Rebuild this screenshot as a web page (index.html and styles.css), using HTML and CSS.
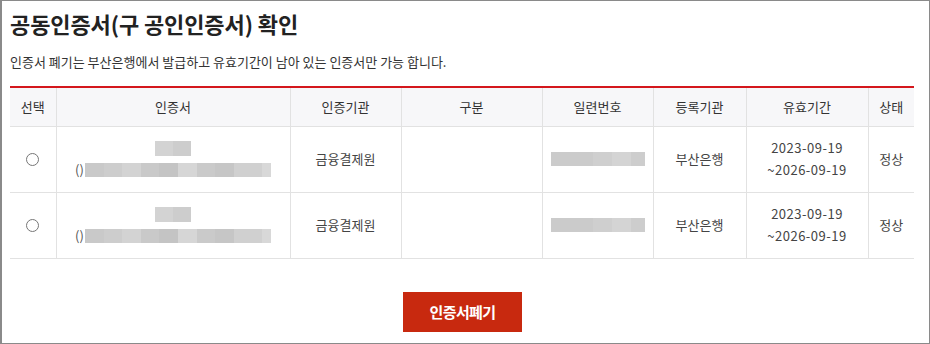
FILE: index.html
```html
<html>
<head>
    <title>공동인증서 확인</title>
    <link rel="stylesheet" href="styles.css">
</head>
<body>

<div class="page">
    <!-- 제목 -->
    <h2 class="title">공동인증서(구 공인인증서) 확인</h2>
    <p class="desc">인증서 폐기는 부산은행에서 발급하고 유효기간이 남아 있는 인증서만 가능 합니다.</p>

    <!-- 인증서 목록 -->
    <table class="cert-table">
        <colgroup>
            <col style="width:46px">
            <col style="width:234px">
            <col style="width:111px">
            <col style="width:141px">
            <col style="width:111px">
            <col style="width:93px">
            <col style="width:122px">
            <col style="width:46px">
        </colgroup>
        <thead>
            <tr>
                <th>선택</th>
                <th>인증서</th>
                <th>인증기관</th>
                <th>구분</th>
                <th>일련번호</th>
                <th>등록기관</th>
                <th>유효기간</th>
                <th>상태</th>
            </tr>
        </thead>
        <tbody>
            <tr>
                <td><input type="radio" name="cert" class="radio"></td>
                <td>
                    <div class="blur-name"></div>
                    <div class="cert-dn">()<span class="blur-dn"></span></div>
                </td>
                <td>금융결제원</td>
                <td></td>
                <td><span class="blur-serial"></span></td>
                <td>부산은행</td>
                <td class="period">2023-09-19<br>~2026-09-19</td>
                <td>정상</td>
            </tr>
            <tr>
                <td><input type="radio" name="cert" class="radio"></td>
                <td>
                    <div class="blur-name"></div>
                    <div class="cert-dn">()<span class="blur-dn"></span></div>
                </td>
                <td>금융결제원</td>
                <td></td>
                <td><span class="blur-serial"></span></td>
                <td>부산은행</td>
                <td class="period">2023-09-19<br>~2026-09-19</td>
                <td>정상</td>
            </tr>
        </tbody>
    </table>

    <!-- 폐기 버튼 -->
    <div class="btn-area">
        <button type="button" class="btn-red">인증서폐기</button>
    </div>
</div>

</body>
</html>
```

FILE: styles.css
```css
/* 기본 */
body {
    margin: 0;
    background-color: #fff;
    font-family: 'Noto Sans CJK KR', 'Noto Sans', sans-serif;
    color: #333;
}

/* 전체 틀 */
.page {
    width: 930px;
    height: 344px;
    box-sizing: border-box;
    border: 1px solid #8a8a8a;
    border-left-width: 2px;
    padding: 7px 14px 0 8px;
}

/* 제목 */
.title {
    margin: 0;
    font-size: 22px;
    line-height: 30px;
    font-weight: 700;
    letter-spacing: -0.1px;
    color: #222;
}

.desc {
    margin: 14px 0 14px;
    font-size: 13px;
    line-height: 20px;
    letter-spacing: 0;
    color: #333;
}

/* 인증서 표 */
.cert-table {
    width: 904px;
    border-collapse: collapse;
    table-layout: fixed;
    border-top: 2px solid #d4171c;
}

.cert-table th {
    height: 39px;
    padding: 0;
    background-color: #f7f7f9;
    font-size: 13px;
    font-weight: 400;
    letter-spacing: 0;
    color: #333;
    border-bottom: 1px solid #e2e2e2;
    border-left: 1px solid #e2e2e2;
}

.cert-table td {
    height: 66px;
    padding: 0;
    text-align: center;
    font-size: 13px;
    line-height: 22px;
    letter-spacing: 0;
    color: #444;
    border-bottom: 1px solid #e2e2e2;
    border-left: 1px solid #e2e2e2;
}

.cert-table th:first-child,
.cert-table td:first-child {
    border-left: none;
}

.cert-table .period {
    letter-spacing: 0.5px;
}

.radio {
    margin: 0;
    width: 13px;
    height: 13px;
    vertical-align: middle;
}

/* 가려진 정보 */
.blur-name {
    width: 36px;
    height: 15px;
    margin: 0 auto 7px;
    background: linear-gradient(90deg, #d3d3d3 0 50%, #cdcdcd 50% 100%);
}

.cert-dn {
    display: flex;
    justify-content: center;
    align-items: center;
    height: 14px;
    line-height: 14px;
    color: #555;
}

.blur-dn {
    display: inline-block;
    width: 186px;
    height: 14px;
    margin-left: 1px;
    background: linear-gradient(90deg,
        #c9c9c9 0 10%, #cdcdcd 10% 20%, #d3d3d3 20% 30%, #c9c9c9 30% 40%,
        #c4c4c4 40% 50%, #d6d6d6 50% 60%, #cacaca 60% 70%, #c6c6c6 70% 80%,
        #d0d0d0 80% 95%, #d8d8d8 95% 100%);
}

.blur-serial {
    display: inline-block;
    width: 94px;
    height: 14px;
    vertical-align: middle;
    background: linear-gradient(90deg,
        #cbcbcb 0 45%, #cfcfcf 45% 65%, #d4d4d4 65% 85%, #cdcdcd 85% 100%);
}

/* 버튼 */
.btn-area {
    margin-top: 33px;
    text-align: center;
}

.btn-red {
    width: 119px;
    height: 40px;
    border: none;
    background-color: #c8290f;
    color: #fff;
    font-family: 'Noto Sans CJK KR', sans-serif;
    font-size: 15px;
    font-weight: 700;
    letter-spacing: -0.6px;
    cursor: pointer;
}
```
